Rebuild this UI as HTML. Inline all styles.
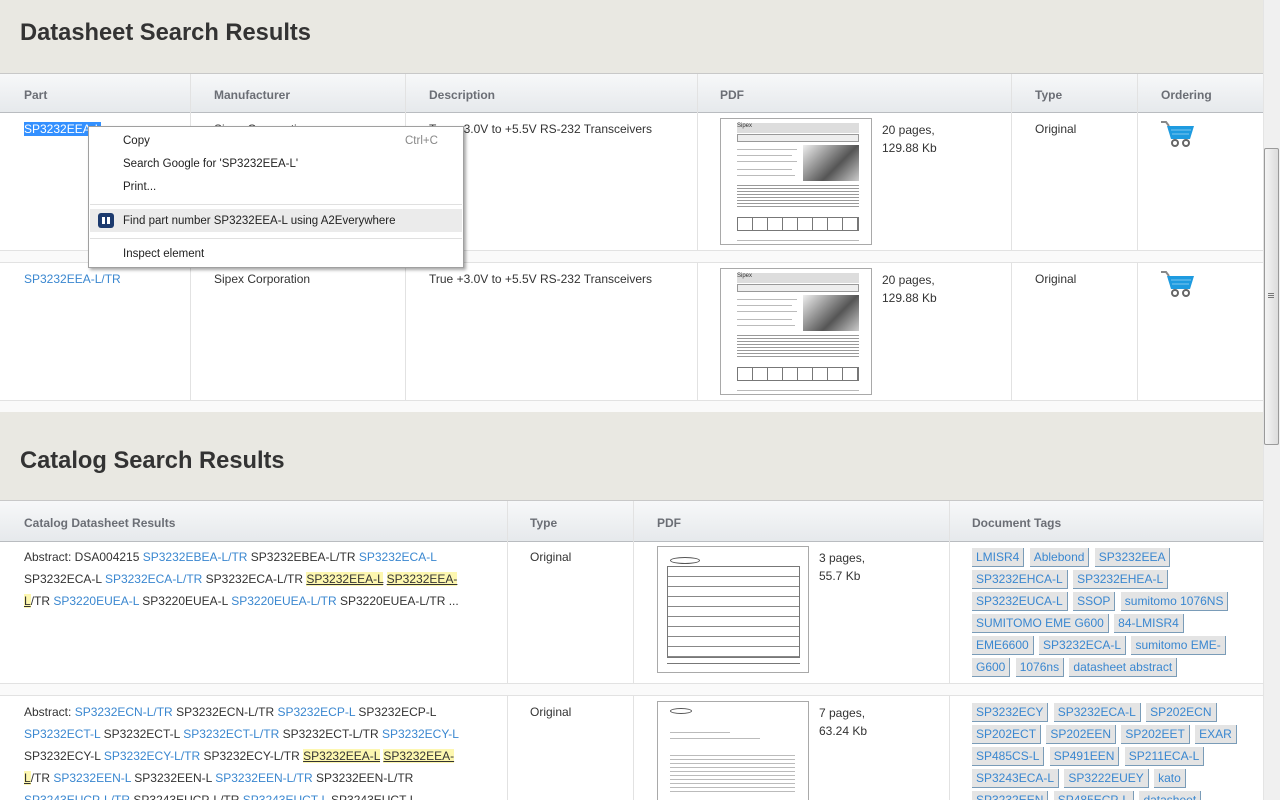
<!DOCTYPE html>
<html><head><meta charset="utf-8">
<style>
*{margin:0;padding:0;box-sizing:border-box}
html,body{width:1280px;height:800px;overflow:hidden}
body{position:relative;background:#e9e8e2;font-family:"Liberation Sans",Arial,sans-serif;font-size:12px;color:#333}
.abs{position:absolute}
h1{position:absolute;font-size:23.7px;font-weight:bold;color:#333;left:20px}
.tbl{position:absolute;left:0;width:1263px;background:#fff;border-top:1px solid #c8c8c8}
.hdr{position:absolute;left:0;width:1263px;background:linear-gradient(#f7f8f9,#e6e9ec);border-bottom:1px solid #b9bcc0}
.hdr span{position:absolute;font-weight:bold;color:#6b6e75;font-size:12px}
.vl{position:absolute;width:1px;background:#e2e2e2}
.hl{position:absolute;left:0;width:1263px;height:1px;background:#e2e2e2}
a,.a{color:#3a87d0;text-decoration:none}
.t{position:absolute;line-height:22px;font-size:12px}
.hi{background:#fdf7b0;text-decoration:underline;color:#333}
.thumb{position:absolute;background:#fff;border:1px solid #a9a9a9;overflow:hidden}
.ln{position:absolute;height:1px;background:#bbb}
.tags{position:absolute;width:268px;line-height:22px}
.tag{background:#e4e4e4;color:#3a87d0;border-right:1px solid #7a9cb8;border-bottom:1px solid #7a9cb8;padding:2px 4px;margin-right:2px;font-size:12px;white-space:nowrap;-webkit-box-decoration-break:clone;box-decoration-break:clone}
.tag.w{white-space:normal}
.menu{position:absolute;left:88px;top:126px;width:376px;height:142px;background:#fff;border:1px solid #a0a0a0;box-shadow:2px 2px 3px rgba(0,0,0,.35);font-family:"Liberation Sans",sans-serif;font-size:11.5px;color:#222}
.menu div{position:absolute;left:34px}
</style></head><body>
<h1 style="top:20px">Datasheet Search Results</h1>
<div class="tbl" style="top:73px;height:328px"></div>
<div class="hdr" style="top:74px;height:39px">
<span style="left:24px;top:14px">Part</span><span style="left:214px;top:14px">Manufacturer</span><span style="left:429px;top:14px">Description</span><span style="left:720px;top:14px">PDF</span><span style="left:1035px;top:14px">Type</span><span style="left:1161px;top:14px">Ordering</span>
</div>
<div class="vl" style="left:190px;top:74px;height:176px"></div><div class="vl" style="left:405px;top:74px;height:176px"></div><div class="vl" style="left:697px;top:74px;height:176px"></div><div class="vl" style="left:1011px;top:74px;height:176px"></div><div class="vl" style="left:1137px;top:74px;height:176px"></div>
<div class="vl" style="left:190px;top:262px;height:138px"></div><div class="vl" style="left:405px;top:262px;height:138px"></div><div class="vl" style="left:697px;top:262px;height:138px"></div><div class="vl" style="left:1011px;top:262px;height:138px"></div><div class="vl" style="left:1137px;top:262px;height:138px"></div>
<div class="hl" style="top:250px"></div><div class="hl" style="top:262px"></div><div class="hl" style="top:400px"></div>
<div class="abs" style="left:0;top:251px;width:1263px;height:11px;background:#fafafa"></div>
<div class="abs" style="left:0;top:401px;width:1263px;height:11px;background:#fafafa"></div>
<div class="t" style="left:24px;top:118px"><span style="background:#3390ff;color:#fff">SP3232EEA-L</span></div>
<div class="t" style="left:214px;top:118px">Sipex Corporation</div>
<div class="t" style="left:429px;top:118px">True +3.0V to +5.5V RS-232 Transceivers</div>
<div class="t" style="left:882px;top:121px;line-height:18px">20 pages,<br>129.88 Kb</div>
<div class="t" style="left:1035px;top:118px">Original</div>
<div class="t" style="left:24px;top:268px"><a>SP3232EEA-L/TR</a></div>
<div class="t" style="left:214px;top:268px">Sipex Corporation</div>
<div class="t" style="left:429px;top:268px">True +3.0V to +5.5V RS-232 Transceivers</div>
<div class="t" style="left:882px;top:271px;line-height:18px">20 pages,<br>129.88 Kb</div>
<div class="t" style="left:1035px;top:268px">Original</div>

<div class="thumb" style="left:720px;top:118px;width:152px;height:127px">
<div class="abs" style="left:16px;top:4px;width:122px;height:10px;background:#ddd;font-size:6px;color:#333">Sipex</div>
<div class="abs" style="left:16px;top:15px;width:122px;height:8px;background:#eee;border:1px solid #999"></div>
<div class="abs" style="left:82px;top:26px;width:56px;height:36px;background:linear-gradient(135deg,#eee,#555 60%,#ccc)"></div>
<div class="ln" style="left:16px;top:30px;width:60px"></div><div class="ln" style="left:16px;top:36px;width:55px"></div><div class="ln" style="left:16px;top:42px;width:60px"></div><div class="ln" style="left:16px;top:50px;width:55px"></div><div class="ln" style="left:16px;top:56px;width:58px"></div>
<div class="abs" style="left:16px;top:66px;width:122px;height:24px;background:repeating-linear-gradient(#999 0 1px,#fff 1px 3px)"></div>
<div class="abs" style="left:16px;top:98px;width:122px;height:14px;border:1px solid #777;background:repeating-linear-gradient(90deg,#fff 0 14px,#777 14px 15px)"></div>
<div class="ln" style="left:16px;top:121px;width:122px"></div>
</div>
<div class="thumb" style="left:720px;top:268px;width:152px;height:127px">
<div class="abs" style="left:16px;top:4px;width:122px;height:10px;background:#ddd;font-size:6px;color:#333">Sipex</div>
<div class="abs" style="left:16px;top:15px;width:122px;height:8px;background:#eee;border:1px solid #999"></div>
<div class="abs" style="left:82px;top:26px;width:56px;height:36px;background:linear-gradient(135deg,#eee,#555 60%,#ccc)"></div>
<div class="ln" style="left:16px;top:30px;width:60px"></div><div class="ln" style="left:16px;top:36px;width:55px"></div><div class="ln" style="left:16px;top:42px;width:60px"></div><div class="ln" style="left:16px;top:50px;width:55px"></div><div class="ln" style="left:16px;top:56px;width:58px"></div>
<div class="abs" style="left:16px;top:66px;width:122px;height:24px;background:repeating-linear-gradient(#999 0 1px,#fff 1px 3px)"></div>
<div class="abs" style="left:16px;top:98px;width:122px;height:14px;border:1px solid #777;background:repeating-linear-gradient(90deg,#fff 0 14px,#777 14px 15px)"></div>
<div class="ln" style="left:16px;top:121px;width:122px"></div>
</div>
<svg class="abs" style="left:1160px;top:120px" width="36" height="28" viewBox="0 0 36 28"><path d="M1 2h5l3 4" stroke="#888" stroke-width="2" fill="none"/><path d="M7 6h27l-4 13H11z" fill="#1e9be0"/><path d="M11 10h20M12 14h17" stroke="#7cc7f0" stroke-width="1"/><circle cx="15" cy="23" r="3" fill="#fff" stroke="#666" stroke-width="2"/><circle cx="26" cy="23" r="3" fill="#fff" stroke="#666" stroke-width="2"/></svg>
<svg class="abs" style="left:1160px;top:270px" width="36" height="28" viewBox="0 0 36 28"><path d="M1 2h5l3 4" stroke="#888" stroke-width="2" fill="none"/><path d="M7 6h27l-4 13H11z" fill="#1e9be0"/><path d="M11 10h20M12 14h17" stroke="#7cc7f0" stroke-width="1"/><circle cx="15" cy="23" r="3" fill="#fff" stroke="#666" stroke-width="2"/><circle cx="26" cy="23" r="3" fill="#fff" stroke="#666" stroke-width="2"/></svg>

<h1 style="top:448px">Catalog Search Results</h1>
<div class="tbl" style="top:500px;height:300px"></div>
<div class="hdr" style="top:501px;height:41px">
<span style="left:24px;top:15px">Catalog Datasheet Results</span><span style="left:530px;top:15px">Type</span><span style="left:657px;top:15px">PDF</span><span style="left:972px;top:15px">Document Tags</span>
</div>
<div class="vl" style="left:507px;top:501px;height:182px"></div><div class="vl" style="left:633px;top:501px;height:182px"></div><div class="vl" style="left:949px;top:501px;height:182px"></div>
<div class="vl" style="left:507px;top:695px;height:105px"></div><div class="vl" style="left:633px;top:695px;height:105px"></div><div class="vl" style="left:949px;top:695px;height:105px"></div>
<div class="hl" style="top:683px"></div><div class="hl" style="top:695px"></div>
<div class="abs" style="left:0;top:684px;width:1263px;height:11px;background:#fafafa"></div>

<div class="t" style="left:24px;top:546px;width:450px">Abstract: DSA004215 <a>SP3232EBEA-L/TR</a> SP3232EBEA-L/TR <a>SP3232ECA-L</a> SP3232ECA-L <a>SP3232ECA-L/TR</a> SP3232ECA-L/TR <span class="hi">SP3232EEA-L</span> <span class="hi">SP3232EEA-<br>L</span>/TR <a>SP3220EUEA-L</a> SP3220EUEA-L <a>SP3220EUEA-L/TR</a> SP3220EUEA-L/TR ...</div>
<div class="t" style="left:530px;top:546px">Original</div>
<div class="t" style="left:819px;top:549px;line-height:18px">3 pages,<br>55.7 Kb</div>
<div class="thumb" style="left:657px;top:546px;width:152px;height:127px">
<div class="abs" style="left:12px;top:10px;width:30px;height:7px;border:1px solid #555;border-radius:50%"></div>
<div class="abs" style="left:9px;top:19px;width:133px;height:92px;border:1px solid #777;background:repeating-linear-gradient(#fff 0 9px,#888 9px 10px)"></div>
<div class="ln" style="left:9px;top:116px;width:133px;background:#777"></div>
</div>
<div class="tags" style="left:972px;top:546px"><span class="tag">LMISR4</span> <span class="tag">Ablebond</span> <span class="tag">SP3232EEA</span> <span class="tag">SP3232EHCA-L</span> <span class="tag">SP3232EHEA-L</span> <span class="tag">SP3232EUCA-L</span> <span class="tag">SSOP</span> <span class="tag">sumitomo 1076NS</span> <span class="tag">SUMITOMO EME G600</span> <span class="tag">84-LMISR4</span> <span class="tag">EME6600</span> <span class="tag">SP3232ECA-L</span> <span class="tag w">sumitomo EME-&#8203;G600</span> <span class="tag">1076ns</span> <span class="tag">datasheet abstract</span></div>

<div class="t" style="left:24px;top:701px;width:450px">Abstract: <a>SP3232ECN-L/TR</a> SP3232ECN-L/TR <a>SP3232ECP-L</a> SP3232ECP-L <a>SP3232ECT-L</a> SP3232ECT-L <a>SP3232ECT-L/TR</a> SP3232ECT-L/TR <a>SP3232ECY-L</a> SP3232ECY-L <a>SP3232ECY-L/TR</a> SP3232ECY-L/TR <span class="hi">SP3232EEA-L</span> <span class="hi">SP3232EEA-<br>L</span>/TR <a>SP3232EEN-L</a> SP3232EEN-L <a>SP3232EEN-L/TR</a> SP3232EEN-L/TR<br><a>SP3243EUCP-L/TR</a> SP3243EUCP-L/TR <a>SP3243EUCT-L</a> SP3243EUCT-L</div>
<div class="t" style="left:530px;top:701px">Original</div>
<div class="t" style="left:819px;top:704px;line-height:18px">7 pages,<br>63.24 Kb</div>
<div class="thumb" style="left:657px;top:701px;width:152px;height:110px">
<div class="abs" style="left:12px;top:6px;width:22px;height:6px;border:1px solid #555;border-radius:50%"></div>
<div class="ln" style="left:12px;top:30px;width:60px"></div><div class="ln" style="left:12px;top:36px;width:90px"></div><div class="abs" style="left:12px;top:50px;width:125px;height:40px;background:repeating-linear-gradient(#fff 0 3px,#bbb 3px 4px)"></div>
</div>
<div class="tags" style="left:972px;top:701px"><span class="tag">SP3232ECY</span> <span class="tag">SP3232ECA-L</span> <span class="tag">SP202ECN</span> <span class="tag">SP202ECT</span> <span class="tag">SP202EEN</span> <span class="tag">SP202EET</span> <span class="tag">EXAR</span> <span class="tag">SP485CS-L</span> <span class="tag">SP491EEN</span> <span class="tag">SP211ECA-L</span> <span class="tag">SP3243ECA-L</span> <span class="tag">SP3222EUEY</span> <span class="tag">kato</span> <span class="tag">SP3232EEN</span> <span class="tag">SP485ECP-L</span> <span class="tag">datasheet</span></div>

<div class="abs" style="left:1263px;top:0;width:17px;height:800px;background:#f0f0f0;border-left:1px solid #e4e4e4"></div>
<div class="abs" style="left:1264px;top:148px;width:15px;height:297px;background:linear-gradient(90deg,#f4f4f4,#dcdcdc);border:1px solid #9a9a9a;border-radius:2px"></div>
<div class="abs" style="left:1268px;top:293px;width:6px;height:5px;border-top:1px solid #777;border-bottom:1px solid #777"><div style="height:1px;margin-top:1px;background:#777"></div></div>

<div class="menu">
<div style="top:8px">Copy</div><div style="top:8px;left:316px;color:#888">Ctrl+C</div>
<div style="top:31px">Search Google for 'SP3232EEA-L'</div>
<div style="top:54px">Print...</div>
<div style="left:1px;top:77px;width:372px;height:1px;background:#e0e0e0"></div>
<div style="left:1px;top:82px;width:372px;height:23px;background:#ebebeb"></div>
<div style="left:9px;top:86px;width:16px;height:15px;background:#1c3a6e;border-radius:3px"><div style="position:absolute;left:4px;top:4px;width:3px;height:7px;background:#fff"></div><div style="position:absolute;left:9px;top:4px;width:3px;height:7px;background:#fff"></div></div>
<div style="top:88px">Find part number SP3232EEA-L using A2Everywhere</div>
<div style="left:1px;top:111px;width:372px;height:1px;background:#e0e0e0"></div>
<div style="top:121px">Inspect element</div>
</div>
</body></html>
